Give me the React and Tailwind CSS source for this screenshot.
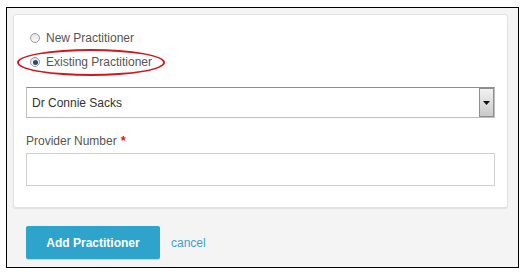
import React, { useState } from "react";

const Radio = ({ checked }) => (
  <span className="w-[10px] h-[10px] rounded-full border border-[#9a9a9a] bg-gradient-to-b from-[#e4e4e4] to-[#fafafa] flex items-center justify-center shrink-0">
    {checked && <span className="w-[5px] h-[5px] rounded-full bg-[#2d4a66]" />}
  </span>
);

const App = () => {
  const [choice, setChoice] = useState("existing");

  return (
    <div className="w-[525px] h-[274px] bg-white pt-[7px] pl-[6px] font-['Liberation_Sans',Arial,sans-serif]">
      <div className="w-[513px] h-[261px] border border-black bg-[#f4f4f4] flex flex-col">
        <div className="relative mt-[6px] ml-[6px] w-[495px] h-[194px] bg-white rounded-[3px] border border-[#e2e2e2] shadow-[0_1px_1px_rgba(0,0,0,0.08)] pt-[16px] px-[12px] flex flex-col">
          <label
            className="flex items-center gap-[6px] h-[14px] ml-[4px] text-[12px] text-[#555] cursor-pointer"
            onClick={() => setChoice("new")}
          >
            <Radio checked={choice === "new"} />
            New Practitioner
          </label>
          <label
            className="flex items-center gap-[6px] h-[14px] mt-[10px] ml-[4px] text-[12px] text-[#555] cursor-pointer"
            onClick={() => setChoice("existing")}
          >
            <Radio checked={choice === "existing"} />
            Existing Practitioner
          </label>
          <div className="absolute left-[3px] top-[34px] w-[148px] h-[27px] rounded-[50%] border-2 border-[#d4161e]" />

          <div className="mt-[18px] h-[31px] w-[469px] border border-[#bdbdbd] border-t-[#8f8f8f] bg-white flex items-center justify-between">
            <span className="pl-[5px] text-[12px] text-[#333]">Dr Connie Sacks</span>
            <span className="w-[15px] h-[29px] border border-[#8f8f8f] bg-gradient-to-b from-[#f2f2f2] to-[#c9c9c9] flex items-center justify-center">
              <svg width="7" height="4" viewBox="0 0 7 4">
                <path d="M0 0h7L3.5 4z" fill="#111" />
              </svg>
            </span>
          </div>

          <div className="mt-[16px] h-[14px] flex items-center text-[12px] text-[#555]">
            Provider Number<span className="ml-[4px] text-[#e0161e] text-[13px] font-bold">*</span>
          </div>
          <input className="mt-[5px] h-[33px] w-[469px] border border-[#d0d0d0] bg-white outline-none px-[6px] text-[12px]" />
        </div>

        <div className="flex items-center mt-[18px] ml-[19px]">
          <button className="w-[134px] h-[33px] rounded-[2px] bg-[#2ea3cb] text-white text-[12px] font-bold shadow-[0_1px_1px_rgba(0,0,0,0.15)]">
            Add Practitioner
          </button>
          <a className="ml-[11px] text-[12px] text-[#3aa2cf] cursor-pointer">cancel</a>
        </div>
      </div>
    </div>
  );
};

export default App;
